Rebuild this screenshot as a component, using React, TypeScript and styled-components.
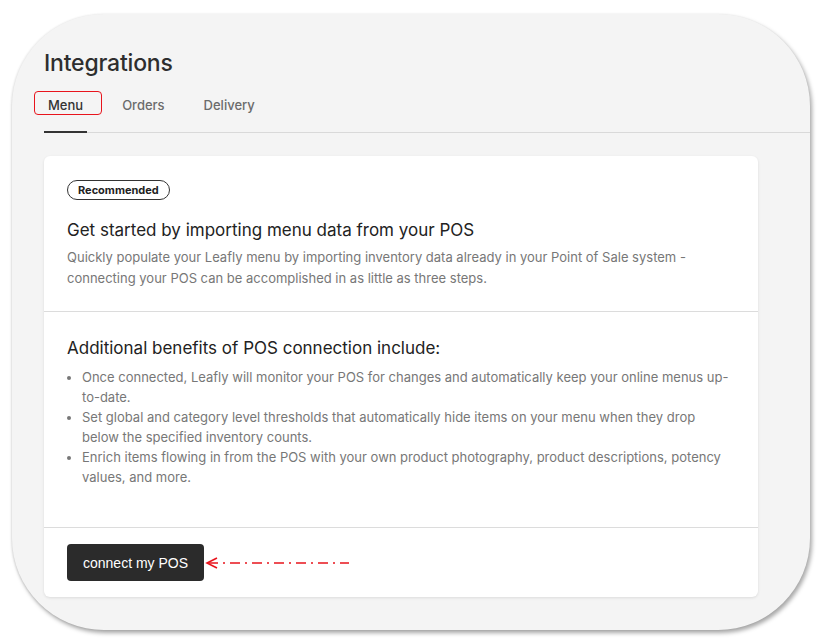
import React from 'react';
import styled, { createGlobalStyle } from 'styled-components';

const GlobalStyle = createGlobalStyle`
  * { box-sizing: border-box; }
  html, body {
    margin: 0;
    padding: 0;
    background: #fff;
    font-family: Inter, "Noto Sans", sans-serif;
  }
`;

const Page = styled.div`
  width: 823px;
  height: 642px;
  padding: 14px 12px 0 12px;
`;

const Panel = styled.div`
  width: 798px;
  height: 616px;
  background: #f4f4f4;
  border-radius: 92px;
  box-shadow: 2px 3px 4px rgba(0, 0, 0, 0.35), -1px 0 2px rgba(0, 0, 0, 0.08);
  padding: 34px 0 0 32px;
  overflow: hidden;
`;

const Title = styled.h1`
  margin: 0;
  font-size: 23px;
  font-weight: 500;
  color: #2e2e2e;
  line-height: 30px;
  letter-spacing: -0.2px;
`;

const TabBar = styled.div`
  display: flex;
  margin-top: 8px;
  border-bottom: 1px solid #d9d9d9;
`;

const Tab = styled.div<{ $active?: boolean }>`
  position: relative;
  padding: 10px 4px 17px;
  margin-right: 31px;
  font-size: 13px;
  font-weight: 500;
  color: ${(p) => (p.$active ? '#333' : '#6b6b6b')};
  border-bottom: 2px solid ${(p) => (p.$active ? '#333' : 'transparent')};
  margin-bottom: -1px;
  line-height: 18px;
`;

const Highlight = styled.span`
  position: absolute;
  left: -10px;
  top: 5px;
  width: 68px;
  height: 24px;
  border: 1.5px solid #e8141c;
  border-radius: 4px;
`;

const Card = styled.div`
  margin: 23px 52px 0 0;
  background: #fff;
  border-radius: 6px;
  box-shadow: 0 1px 3px rgba(0, 0, 0, 0.1);
`;

const Section = styled.div<{ $pad: string }>`
  padding: ${(p) => p.$pad};
  & + & {
    border-top: 1px solid #dcdcdc;
  }
`;

const Pill = styled.span`
  display: inline-block;
  border: 1px solid #333;
  border-radius: 11px;
  padding: 2px 10px;
  font-size: 11px;
  font-weight: 700;
  color: #222;
  line-height: 14px;
`;

const Heading = styled.h2<{ $top: number; $bottom: number }>`
  margin: ${(p) => p.$top}px 0 ${(p) => p.$bottom}px;
  font-size: 17px;
  font-weight: 400;
  color: #222;
  line-height: 26px;
`;

const Text = styled.p`
  margin: 0;
  font-size: 13px;
  color: #777;
  line-height: 21px;
`;

const List = styled.ul`
  margin: 0;
  padding: 0 0 0 15px;
  font-size: 13px;
  color: #777;
  line-height: 20px;
`;

const Footer = styled.div`
  display: flex;
  align-items: center;
`;

const Button = styled.button`
  height: 37px;
  padding: 0 16px;
  background: #2b2b2b;
  color: #fff;
  border: none;
  border-radius: 4px;
  font-family: "Liberation Sans", Arial, sans-serif;
  font-size: 14px;
  cursor: pointer;
`;

const Arrow = () => (
  <svg width="146" height="14" viewBox="0 0 146 14" style={{ marginLeft: 1 }}>
    <path d="M12 2 L2 7 L12 12" fill="none" stroke="#e8141c" strokeWidth="1.6" />
    <line x1="3" y1="7" x2="144" y2="7" stroke="#e8141c" strokeWidth="1.4" strokeDasharray="10 5 2 5" />
  </svg>
);

export default function App() {
  return (
    <>
      <GlobalStyle />
      <Page>
        <Panel>
          <Title>Integrations</Title>
          <TabBar>
            <Tab $active>
              <Highlight />
              Menu
            </Tab>
            <Tab>Orders</Tab>
            <Tab>Delivery</Tab>
          </TabBar>
          <Card>
            <Section $pad="22px 23px 22px">
              <Pill>Recommended</Pill>
              <Heading $top={17} $bottom={4}>Get started by importing menu data from your POS</Heading>
              <Text>
                Quickly populate your Leafly menu by importing inventory data already in your Point of Sale system - connecting your POS can be accomplished in as little as three steps.
              </Text>
            </Section>
            <Section $pad="23px 23px 40px">
              <Heading $top={0} $bottom={6}>Additional benefits of POS connection include:</Heading>
              <List>
                <li>Once connected, Leafly will monitor your POS for changes and automatically keep your online menus up-to-date.</li>
                <li>Set global and category level thresholds that automatically hide items on your menu when they drop below the specified inventory counts.</li>
                <li>Enrich items flowing in from the POS with your own product photography, product descriptions, potency values, and more.</li>
              </List>
            </Section>
            <Section $pad="16px 23px 16px">
              <Footer>
                <Button>connect my POS</Button>
                <Arrow />
              </Footer>
            </Section>
          </Card>
        </Panel>
      </Page>
    </>
  );
}
